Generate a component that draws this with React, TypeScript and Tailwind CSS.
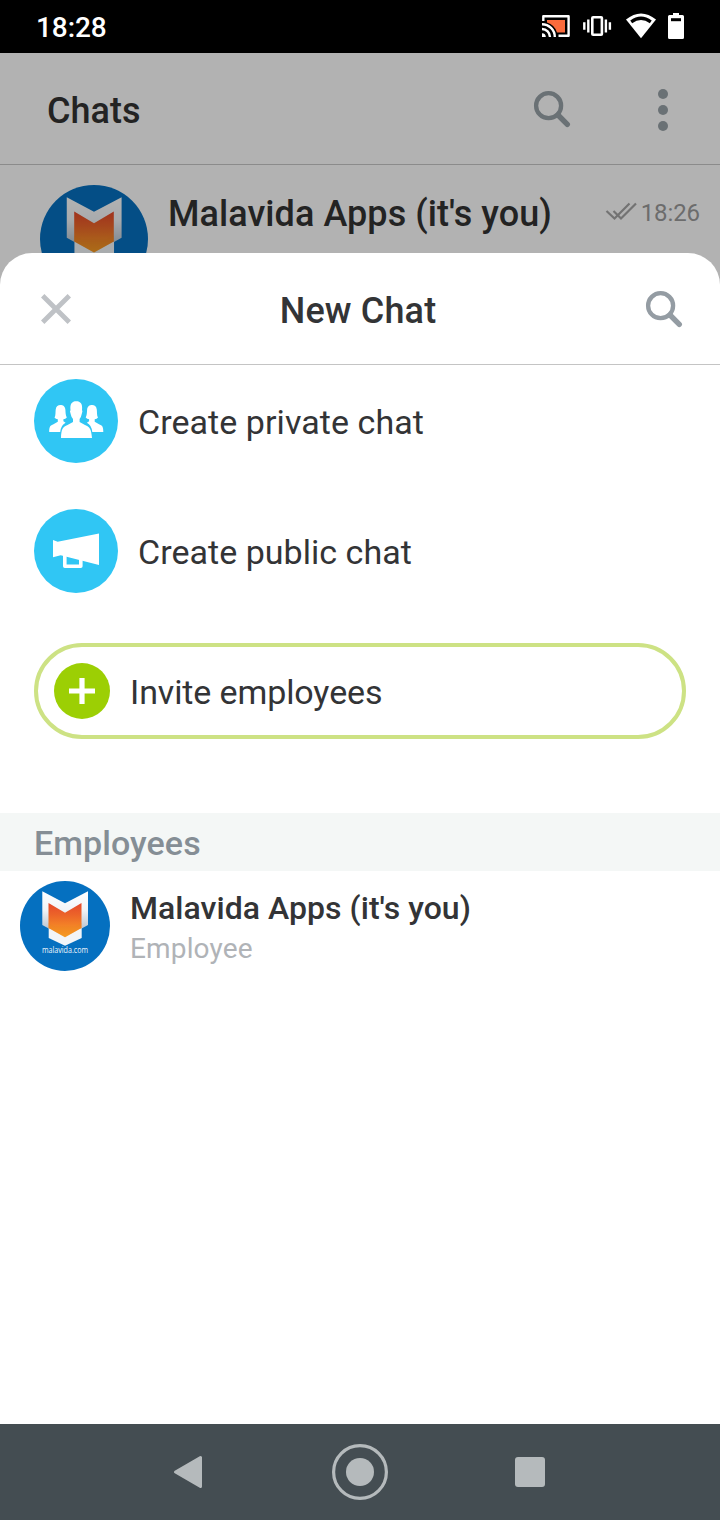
type AvatarProps = { className: string; id: string; caption?: string };

function Avatar({ className, id, caption }: AvatarProps) {
  return (
    <svg viewBox="0 0 90 90" className={className}>
      <defs>
        <linearGradient id={`${id}-flame`} x1="0" y1="0" x2="0" y2="1">
          <stop offset="0" stopColor="#e5482b" />
          <stop offset="0.35" stopColor="#ec6429" />
          <stop offset="1" stopColor="#fba324" />
        </linearGradient>
        <linearGradient id={`${id}-shade`} x1="0" y1="0" x2="0" y2="1">
          <stop offset="0" stopColor="#ffffff" />
          <stop offset="0.5" stopColor="#f1f4f7" />
          <stop offset="1" stopColor="#bcc7d3" />
        </linearGradient>
      </defs>
      <circle cx="45" cy="45" r="45" fill="#0570c0" />
      <path d="M28.7 42H61.7V57L45 64.8L28.7 57Z" fill="#f2f5f8" />
      <path d="M22.3 10.2L45 22.3L68 10.2V44L61.7 47.4H28.7L22.3 44Z" fill={`url(#${id}-shade)`} />
      <path d="M28.5 22L45 31.8L61.5 22V47L45 56.2L28.5 47Z" fill={`url(#${id}-flame)`} />
      <path d="M28.5 42V47L45 56.2L61.5 47V42L55 45.5H35Z" fill="#e88220" opacity="0.25" />
      {caption && (
        <text x="22" y="72.4" fontSize="8.4" textLength="46" lengthAdjust="spacingAndGlyphs" fill="#f0f6fb" className="font-['Open_Sans',sans-serif]">
          {caption}
        </text>
      )}
    </svg>
  );
}

function SearchIcon({ className }: { className: string }) {
  return (
    <svg viewBox="0 0 38 38" fill="none" stroke="currentColor" className={className}>
      <circle cx="15.6" cy="15.7" r="12.5" strokeWidth="4.3" />
      <path d="M25 25L34.3 34.3" strokeWidth="5.4" strokeLinecap="round" />
    </svg>
  );
}

function StatusBar() {
  return (
    <div className="flex h-[53px] shrink-0 items-center justify-between bg-black pl-9 pr-[36px] text-white">
      <span className="pt-[3px] text-[28px] font-medium leading-none tracking-[-0.1px]">18:28</span>
      <svg viewBox="540 12 144 28" className="mb-px h-7 w-36" fill="none">
        <path d="M543.3 21V16.3H568.6V35.7H558.5" stroke="#fff" strokeWidth="2.4" strokeLinejoin="round" />
        <path d="M547 20H565V32.5H557A15 15 0 0 0 547 22.5Z" fill="#fb6b3c" />
        <g stroke="#fff" strokeWidth="2.4">
          <path d="M542 24.2A12.8 12.8 0 0 1 554.8 37" />
          <path d="M542 29A8 8 0 0 1 550 37" />
        </g>
        <path d="M542 33.2A3.8 3.8 0 0 1 545.8 37H542Z" fill="#fff" />
        <rect x="592.3" y="17.3" width="9.6" height="17.4" rx="0.8" stroke="#fff" strokeWidth="2.6" />
        <path d="M588.3 19.5V32.5M605.9 19.5V32.5M584.3 22.3V29.7M609.9 22.3V29.7" stroke="#fff" strokeWidth="2.4" />
        <path d="M626 19.6Q641 7.3 656 19.6L641 38.3Z" fill="#fff" />
        <path d="M631.2 21.9Q641 14.6 650.8 21.9" stroke="#000" strokeWidth="3.2" />
        <path d="M673 13H679V15H682.5Q684 15 684 16.5V37.5Q684 39 682.5 39H669.5Q668 39 668 37.5V16.5Q668 15 669.5 15H673Z" fill="#fff" />
        <path d="M671 18.2H681V21.2H671Z" fill="#000" />
      </svg>
    </div>
  );
}

function ChatsBackdrop() {
  return (
    <div className="h-[200px] shrink-0 overflow-hidden bg-[#b2b2b2]">
      <div className="flex h-28 items-center border-b border-[#8b8b8b] pl-[47px] pr-[52px]">
        <h1 className="grow pt-1 text-[36px] font-medium leading-none text-[#232323]">Chats</h1>
        <SearchIcon className="mr-[87px] size-[38px] text-[#6a7175]" />
        <svg viewBox="0 0 10 42" className="mt-0.5 h-[42px] w-2.5 fill-[#6a7175]">
          <circle cx="5" cy="5" r="5" />
          <circle cx="5" cy="21" r="5" />
          <circle cx="5" cy="37" r="5" />
        </svg>
      </div>
      <div className="flex items-start pl-10 pr-5 pt-5">
        <Avatar id="backdrop" className="size-[108px] shrink-0 brightness-[0.7]" />
        <span className="ml-5 mt-[11px] grow whitespace-nowrap text-[36px] font-medium leading-none tracking-[0.06px] text-[#232323]">
          Malavida Apps (it's you)
        </span>
        <svg viewBox="0 0 32 20" className="mr-1 mt-[17px] h-5 w-8" fill="none" stroke="#737373" strokeWidth="2.2">
          <path d="M1.5 9L9.5 16.5L24.5 1.5" />
          <path d="M8.5 9L16 16.5L31 1.5" />
        </svg>
        <span className="mt-4 text-[24px] leading-none tracking-[-0.1px] text-[#6c6c6c]">18:26</span>
      </div>
    </div>
  );
}

function PeopleIcon() {
  const sidePerson =
    "M54.5 417.6C55.8 415.5 55.4 412 55.7 409.4C56.2 406.2 58 405 60.4 405C63 405 65 406.3 65.4 409.8C65.6 412.8 65.6 415.5 66.8 417.6Q65.5 419.2 63.4 419.2V421.2L65.6 422.8Q61 425 60.2 432H49.2C49.2 427.3 49.8 425.4 53 424.4L57.8 421.8V419.2Q55.6 419.2 54.5 417.6Z";
  return (
    <svg viewBox="34 379 84 84" className="size-[84px] shrink-0">
      <circle cx="76" cy="421" r="42" fill="#30c6f4" />
      <g fill="#fff">
        <path d={sidePerson} />
        <path d={sidePerson} transform="translate(152.5 0) scale(-1 1)" />
        <path d="M61 438C61.2 429 63 426.6 67.5 425L73 422.1V419Q71.2 417 70.8 414.5L70 411.5Q70.2 410.7 70.5 410.2C69.8 403.8 72 401.3 76.2 401.3C80.5 401.3 82.8 403.8 82 410.2Q82.4 410.7 82.4 411.5L81.6 414.5Q81.2 417 79.6 419V422.1L85 425C89.6 426.6 91.3 429 92 438Z" />
      </g>
    </svg>
  );
}

function MegaphoneIcon() {
  return (
    <svg viewBox="34 509 84 84" className="size-[84px] shrink-0">
      <circle cx="76" cy="551" r="42" fill="#30c6f4" />
      <path d="M53 540L57.7 541.8L99 533.5V565L60.7 555.2L53 557.2Z" fill="#fff" />
      <path d="M64.8 555V566.3H80.8V559" fill="none" stroke="#fff" strokeWidth="3.6" strokeLinejoin="round" />
    </svg>
  );
}

function NewChatSheet() {
  return (
    <div className="flex grow flex-col bg-[#b2b2b2]">
      <div className="flex grow flex-col rounded-t-[32px] bg-white text-[#333436]">
        <div className="flex h-28 items-center justify-between border-b border-[#c4c4c4] pl-[41px] pr-[37px]">
          <svg viewBox="0 0 30 30" className="size-[30px]" fill="none" stroke="#bfc2c6" strokeWidth="4.8">
            <path d="M1.7 1.7L28.3 28.3M28.3 1.7L1.7 28.3" />
          </svg>
          <h2 className="pt-1 text-[36px] font-medium leading-none tracking-[0.15px]">New Chat</h2>
          <SearchIcon className="size-[38px] text-[#949ca3]" />
        </div>
        <div className="flex flex-col px-[34px] pt-3.5 text-[34px] leading-none">
          <div className="flex items-center gap-5">
            <PeopleIcon />
            <span className="pt-px tracking-[0.06px]">Create private chat</span>
          </div>
          <div className="mt-[46px] flex items-center gap-5">
            <MegaphoneIcon />
            <span className="pt-px tracking-[0.03px]">Create public chat</span>
          </div>
          <div className="mt-[50px] flex h-24 items-center gap-5 rounded-full border-4 border-[#cde284] pl-4">
            <svg viewBox="0 0 56 56" className="size-14 shrink-0">
              <circle cx="28" cy="28" r="28" fill="#9ccf04" />
              <path d="M28 15V41M15 28H41" stroke="#fff" strokeWidth="5.2" />
            </svg>
            <span className="pt-px tracking-[-0.11px]">Invite employees</span>
          </div>
        </div>
        <div className="mt-[74px] flex h-[58px] items-center bg-[#f4f7f6] pl-[34px] pt-0.5 text-[34px] font-medium leading-none tracking-[0.08px] text-[#858e95]">
          Employees
        </div>
        <div className="flex items-start gap-5 pl-5 pt-2.5">
          <Avatar id="employee" caption="malavida.com" className="size-[90px] shrink-0" />
          <div className="flex flex-col pt-[11px] leading-none">
            <span className="text-[32px] font-medium tracking-[0.04px]">Malavida Apps (it's you)</span>
            <span className="mt-[11px] text-[28px] tracking-[0.15px] text-[#b0b3b7]">Employee</span>
          </div>
        </div>
      </div>
    </div>
  );
}

function NavigationBar() {
  return (
    <div className="flex h-24 shrink-0 items-center bg-[#444d52] pl-[173px]">
      <svg viewBox="0 0 30 34" className="h-[34px] w-[30px]" fill="#b5babc" stroke="#b5babc" strokeWidth="3" strokeLinejoin="round">
        <path d="M2.5 17L27.5 2.5V31.5Z" />
      </svg>
      <svg viewBox="0 0 56 56" className="ml-[129px] size-14">
        <circle cx="28" cy="28" r="26.4" fill="none" stroke="#b5babc" strokeWidth="3.2" />
        <circle cx="28" cy="28" r="14" fill="#b5babc" />
      </svg>
      <div className="ml-[127px] size-[30px] rounded-[3px] bg-[#b5babc]" />
    </div>
  );
}

export default function App() {
  return (
    <div className="flex h-[1520px] w-[720px] flex-col overflow-hidden bg-white font-[Roboto,sans-serif]">
      <StatusBar />
      <ChatsBackdrop />
      <NewChatSheet />
      <NavigationBar />
    </div>
  );
}
